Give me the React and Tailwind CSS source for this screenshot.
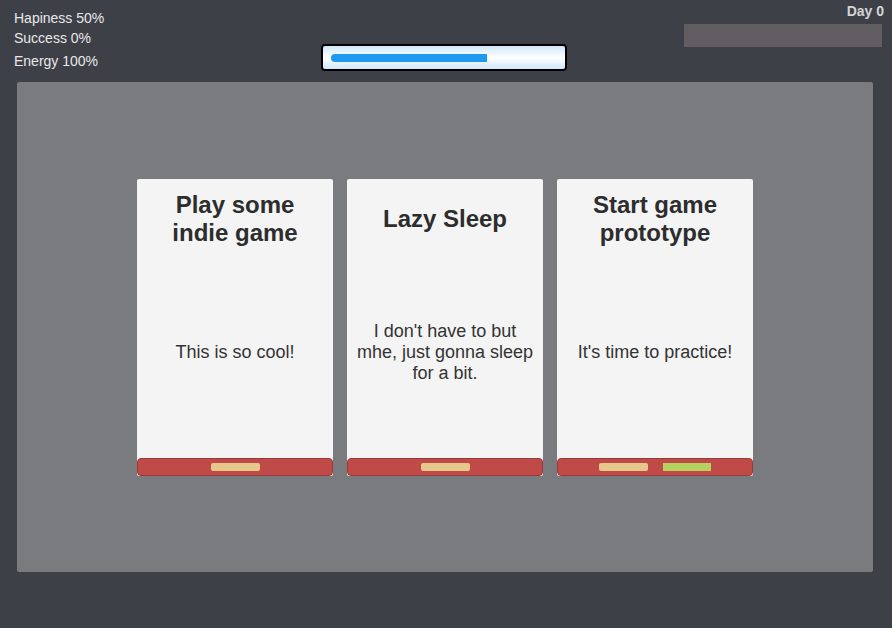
export default function App() {
  const cards = [
    { title: "Play some indie game", desc: "This is so cool!", bars: ["yellow"] },
    { title: "Lazy Sleep", desc: "I don't have to but mhe, just gonna sleep for a bit.", bars: ["yellow"] },
    { title: "Start game prototype", desc: "It's time to practice!", bars: ["yellow", "green"] },
  ];

  return (
    <div
      className="w-[892px] h-[628px] bg-[#3e4048] flex flex-col overflow-hidden"
      style={{ fontFamily: '"Liberation Sans", Arial, sans-serif' }}
    >
      {/* Top HUD */}
      <div className="flex h-[82px] relative">
        <div className="w-[300px] pl-[14px] pt-[8px] text-[14px] text-[#e8e8e8] leading-[20px]">
          <div>Hapiness 50%</div>
          <div>Success 0%</div>
          <div className="mt-[3px]">Energy 100%</div>
        </div>
        <div className="pt-[44px] pl-[21px]">
          <div className="w-[246px] h-[27px] border-2 border-black rounded-[4px] bg-gradient-to-b from-[#cfe8fb] via-white to-[#cfe8fb] px-[8px] flex items-center">
            <div className="w-[156px] h-[8px] bg-[#1e9bf0] rounded-l-full"></div>
          </div>
        </div>
        <div className="flex-1 flex flex-col items-end pr-[8px] pt-[3px]">
          <div className="text-[14px] font-bold text-[#d4d4d4] leading-[17px]">Day 0</div>
          <div className="w-[198px] h-[23px] bg-[#625d60] mt-[4px] mr-[2px]"></div>
        </div>
      </div>

      {/* Main panel */}
      <div className="ml-[17px] w-[856px] h-[490px] bg-[#7a7b7e] rounded-[2px] flex justify-center pt-[97px] gap-[14px]">
        {cards.map((c) => (
          <div key={c.title} className="w-[196px] h-[297px] bg-[#f4f4f4] rounded-[2px] flex flex-col">
            <div className="flex-1 flex flex-col items-center px-[8px]">
              <div className="h-[84px] flex items-center justify-center text-center text-[24px] font-bold text-[#2d2d2d] leading-[28px] pb-[4px]">
                {c.title}
              </div>
              <div className="flex-1 flex items-center justify-center text-center text-[18px] text-[#333] leading-[21px] pb-[16px]">
                {c.desc}
              </div>
            </div>
            <div className="h-[18px] bg-[#bf4a48] border border-[#9a3a38] rounded-[4px] flex items-center justify-center gap-[15px]">
              {c.bars.map((b, i) => (
                <div
                  key={i}
                  className={
                    b === "yellow"
                      ? "w-[49px] h-[8px] bg-[#e6c98a] rounded-[2px]"
                      : "w-[48px] h-[8px] bg-[#b5d25e]"
                  }
                ></div>
              ))}
            </div>
          </div>
        ))}
      </div>
    </div>
  );
}
